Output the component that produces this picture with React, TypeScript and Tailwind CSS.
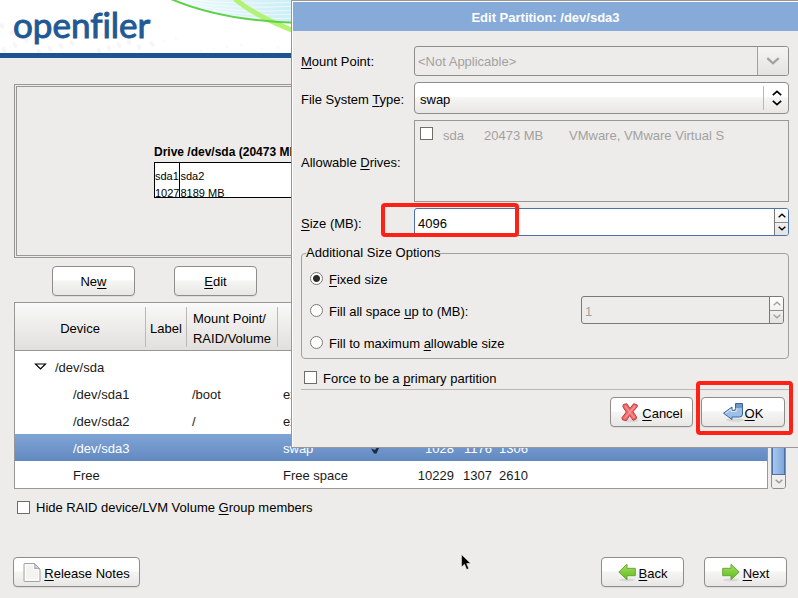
import React, { useState } from 'react';

interface Partition {
  device: string;
  mount: string;
  type: string;
  format: boolean;
  size: number;
  start: number;
  end: number;
}

const PARTITIONS: Partition[] = [
  { device: '/dev/sda1', mount: '/boot', type: 'ext3', format: true, size: 1027, start: 1, end: 131 },
  { device: '/dev/sda2', mount: '/', type: 'ext3', format: true, size: 8189, start: 132, end: 1175 },
  { device: '/dev/sda3', mount: '', type: 'swap', format: true, size: 1028, start: 1176, end: 1306 },
  { device: 'Free', mount: '', type: 'Free space', format: false, size: 10229, start: 1307, end: 2610 },
];

const BUTTON =
  'flex h-[30px] items-center justify-center rounded-[4px] border border-[#8f8c89] bg-linear-to-b from-white from-45% via-[#f5f5f4] via-50% to-[#e8e7e5] pt-0.5 shadow-[0_1px_0_#dddcda]';

const CHECKBOX =
  'h-[13px] w-[13px] shrink-0 appearance-none border border-[#6f6c69] bg-white checked:bg-[#4a72a8]';

// Underlined mnemonic letter
const Key: React.FC<{ children: React.ReactNode }> = ({ children }) => (
  <span className="underline decoration-1 underline-offset-2 [text-decoration-skip-ink:none]">{children}</span>
);

const Chevron: React.FC<{ up?: boolean; size: number; color: string; stroke?: number }> = ({
  up,
  size,
  color,
  stroke = 2,
}) => (
  <svg width={size} height={size / 2 + 1} viewBox="0 0 12 7" fill="none" stroke={color} strokeWidth={stroke} aria-hidden>
    <path d={up ? 'M1 6 6 1.5 11 6' : 'M1 1 6 5.5 11 1'} />
  </svg>
);

const CancelIcon = () => (
  <svg width="20" height="20" viewBox="0 0 20 20" aria-hidden>
    <ellipse cx="10.500" cy="17.500" rx="8" ry="1.800" fill="#d9d8d6" />
    <path
      d="M3.300 1.600 6.800.7 10 5.500 13.600.7 17.200 1.900 17.300 3.600 13 8.700 16.500 14 16.100 16 13.100 17.300 9.700 12.500 6.400 17.600 2.600 16.800 1.900 14.800 6.300 9.100 2.900 3.800Z"
      fill="#ef6a6a"
      stroke="#c23a3e"
      strokeLinejoin="round"
    />
    <path d="M5 3 9.800 9 14.400 15M15 3 9.800 9 4.600 15.500" stroke="#f59a9a" strokeWidth="1.200" fill="none" />
  </svg>
);

const OkIcon = () => (
  <svg width="22" height="20" viewBox="0 0 22 20" aria-hidden>
    <ellipse cx="12" cy="17" rx="9" ry="1.800" fill="#d9d8d6" />
    <path
      d="M12.500.5H19.500V11Q19.500 14 16.500 14H9V16.500L.5 10.200 9 4V7.300H11Q12.500 7.300 12.500 5.500Z"
      fill="#9dbfe6"
      stroke="#3566a4"
      strokeLinejoin="round"
    />
    <path d="M13 1H19V5H13Z" fill="#7495c0" />
    <path d="M2.500 10.200 8 6.200V8.500H12.500Q14 8.500 14 6.500V5.300" stroke="#dbe8f7" fill="none" />
  </svg>
);

const ArrowIcon: React.FC<{ right?: boolean }> = ({ right }) => (
  <svg width="18" height="20" viewBox="0 0 18 20" aria-hidden>
    <defs>
      <linearGradient id="arrow-green" x1="0" y1="0" x2="0" y2="1">
        <stop offset="0" stopColor="#a6e25c" />
        <stop offset="1" stopColor="#5cb81e" />
      </linearGradient>
    </defs>
    <ellipse cx="9" cy="17" rx="8" ry="1.500" fill="#d9d8d6" />
    <path
      d={right ? 'M9 1.200V5.300H.7V12.700H9V16.800L17.200 9Z' : 'M9 1.200V5.300H17.300V12.700H9V16.800L.8 9Z'}
      fill="url(#arrow-green)"
      stroke="#68a83a"
      strokeLinejoin="round"
    />
  </svg>
);

const PageIcon = () => (
  <svg width="18" height="20" viewBox="0 0 18 20" aria-hidden>
    <path d="M1 1Q1 .5 1.500.5H11.500L17 6V18Q17 18.500 16.500 18.500H1.500Q1 18.500 1 18Z" fill="#f3f3f2" stroke="#a3a3a1" />
    <path d="M2.500 2H11V6.500H15.500V17H2.500Z" fill="none" stroke="#ffffff" />
    <path d="M11.500.5Q12.500 3.500 11.500 5.500Q14 5 17 6Z" fill="#d5d5d3" stroke="#a3a3a1" strokeLinejoin="round" />
  </svg>
);

const Banner = () => (
  <header className="relative h-[58px] overflow-hidden border-b-[5px] border-[#1c548f] bg-white">
    <svg className="absolute inset-0 h-full w-full" aria-hidden>
      <defs>
        <linearGradient id="sky" x1="0" x2="1">
          <stop offset="0" stopColor="#f2fbfd" />
          <stop offset="0.180" stopColor="#cdeff6" />
          <stop offset="1" stopColor="#a5deee" />
        </linearGradient>
      </defs>
      <g fill="#f6f6f6">
        {[
          [4, 50], [15, 45], [26, 40], [39, 52], [50, 49], [61, 46], [72, 43], [2, 26], [12, 33],
          [99, 51], [109, 48], [119, 45], [129, 42], [139, 47], [152, 44],
        ].map(([x, y]) => (
          <ellipse key={`${x}-${y}`} cx={x} cy={y} rx="2" ry="3" transform={`rotate(-25 ${x} ${y})`} />
        ))}
      </g>
      <g fill="#fafafa">
        {[[164, 41], [176, 39], [201, 51], [214, 49], [227, 47], [241, 45], [262, 49], [278, 48]].map(([x, y]) => (
          <ellipse key={x} cx={x} cy={y} rx="1" ry="2" transform={`rotate(-25 ${x} ${y})`} />
        ))}
      </g>
      <path d="M172 0Q225 20 300 23H798V0Z" fill="url(#sky)" />
      <g fill="none" stroke="#ffffff" strokeOpacity="0.600">
        <path d="M180 1Q235 10 300 6M185 4Q240 14 300 10M196 8Q245 17 300 14M212 13Q255 20 300 18M190 0Q240 5 300 2" />
      </g>
      <path d="M235 -1Q258 18 300 33" fill="none" stroke="#b4f274" strokeWidth="5" />
      <path d="M171 -1Q222 21 300 23" fill="none" stroke="#5fd04a" strokeWidth="2" />
    </svg>
    <h1 className="relative pl-[13px] font-['Lato',sans-serif] text-[35px] leading-[48px] text-[#1f5a96] [-webkit-text-stroke:1px_#1f5a96] [font-variant-ligatures:none]">
      openfiler
    </h1>
  </header>
);

const DriveMap = () => (
  <section className="mt-[26px] h-[174px] border-[3px] border-double border-[#999795]">
    <div className="mx-auto mt-[57px] w-[492px]">
      <h2 className="h-[18px] leading-[17px] text-xs font-bold">
        Drive /dev/sda (20473 MB) (Model: VMware, VMware Virtual S)
      </h2>
      <div className="flex h-9 border border-black bg-white text-[11px]">
        {PARTITIONS.map((p, i) => (
          <div
            key={p.device}
            className="overflow-hidden border-r border-black pt-[5px] leading-[17px] whitespace-nowrap last:border-r-0"
            style={{ flex: `${p.size} 0 0` }}
          >
            {i < 3 ? p.device.replace('/dev/', '') : p.device}
            <br />
            {p.size} MB
          </div>
        ))}
      </div>
    </div>
  </section>
);

const PartitionTable: React.FC = () => {
  const [selected, setSelected] = useState('/dev/sda3');
  const th = 'h-12 border-b border-[#999795] p-0 font-normal';
  const split = 'flex h-10 items-center justify-center border-r border-[#bbb9b7] pt-1';

  return (
    <div className="mt-1.5 flex gap-[3px]">
      <div className="h-[187px] min-w-0 flex-1 overflow-hidden border border-[#999795] bg-white">
        <table className="w-full table-fixed border-separate border-spacing-0 text-[#1a1a1a]">
          <colgroup>
            <col className="w-[131px]" />
            <col className="w-[41px]" />
            <col className="w-[91px]" />
            <col className="w-[78px]" />
            <col className="w-[46px]" />
            <col className="w-[56px]" />
            <col className="w-[38px]" />
            <col className="w-[36px]" />
            <col />
          </colgroup>
          <thead className="bg-linear-to-b from-[#fafafa] from-0% via-[#edecea] via-50% to-[#e0dfdd] text-black">
            <tr>
              <th className={th}><div className={split}>Device</div></th>
              <th className={th}><div className={split}>Label</div></th>
              <th className={th}>
                <div className={`${split} text-left leading-5`}>
                  Mount Point/
                  <br />
                  RAID/Volume
                </div>
              </th>
              <th className={th}><div className={split}>Type</div></th>
              <th className={th}><div className={split}>Format</div></th>
              <th className={th}><div className={split}>Size</div></th>
              <th className={th}><div className={split}>Start</div></th>
              <th className={th}><div className={split}>End</div></th>
              <th className={th}></th>
            </tr>
          </thead>
          <tbody>
            <tr>
              <td className="h-[29px] p-0 pt-1" colSpan={9}>
                <div className="flex items-center gap-2 pl-[19px]">
                  <svg width="13" height="9" viewBox="0 0 13 9" aria-hidden>
                    <path d="M1.500 1H11.500L6.500 6Z" fill="#fff" stroke="#000" strokeWidth="1.200" />
                  </svg>
                  /dev/sda
                </div>
              </td>
            </tr>
            {PARTITIONS.map((p) => (
              <tr
                key={p.device}
                className={
                  p.device === selected ? 'h-[27px] bg-linear-to-b from-[#80a4d6] to-[#6289c0] text-white' : 'h-[27px]'
                }
                onClick={() => setSelected(p.device)}
              >
                <td className="p-0 pt-0.5 pl-[58px]">{p.device}</td>
                <td className="p-0"></td>
                <td className="p-0 pt-0.5 pl-[5px]">{p.mount}</td>
                <td className="p-0 pt-0.5 pl-[5px] whitespace-nowrap">{p.type}</td>
                <td className="p-0">
                  {p.format && (
                    <svg className="ml-3.5" width="14" height="14" viewBox="0 0 14 14" aria-label="Format">
                      <path d="M1 7.500 4 12.500H6.500Q9 6 13 1.500Q8 4 5 9Z" fill="#1c2c44" />
                    </svg>
                  )}
                </td>
                <td className="p-0 pt-0.5 pr-1 text-right">{p.size}</td>
                <td className="p-0 pt-0.5 pr-1 text-right">{p.start}</td>
                <td className="p-0 pt-0.5 pr-1 text-right">{p.end}</td>
                <td className="p-0"></td>
              </tr>
            ))}
          </tbody>
        </table>
      </div>
      <div className="flex w-[15px] flex-col overflow-hidden rounded-[3px] border border-[#8f8c89]">
        <button className="flex h-[14px] items-center justify-center bg-[#efeeed]" aria-label="Scroll up">
          <Chevron up size={8} color="#999795" />
        </button>
        <div className="flex-1 border-x border-b border-[#4a72a8] bg-linear-to-r from-[#a9c8ee] to-[#80a6da]"></div>
        <button className="flex h-[13px] items-center justify-center bg-[#efeeed]" aria-label="Scroll down">
          <Chevron size={8} color="#999795" />
        </button>
      </div>
    </div>
  );
};

const Spinner: React.FC<{
  id: string;
  value: string;
  onChange: (value: string) => void;
  disabled?: boolean;
  label?: string;
}> = ({ id, value, onChange, disabled, label }) => {
  const arrow = disabled ? '#a3a19f' : '#000000';
  const step = (by: number) => onChange(String(Math.max(1, Number(value) + by)));

  return (
    <div
      className={
        disabled
          ? 'flex h-7 overflow-hidden rounded-[3px] border border-[#7b7875]'
          : 'flex h-7 overflow-hidden rounded-[3px] border border-[#4a72a8] bg-white'
      }
    >
      <input
        id={id}
        aria-label={label}
        className="min-w-0 flex-1 bg-transparent pt-1 pl-[3px] outline-none disabled:text-[#a3a19f]"
        value={value}
        disabled={disabled}
        onChange={(e) => onChange(e.target.value)}
      />
      <div className="flex w-[14px] flex-col border-l border-[#7b7875] bg-linear-to-b from-white to-[#e4e3e1]">
        <button
          className="flex flex-1 items-center justify-center border-b border-[#8f8c89]"
          aria-label="Increase"
          disabled={disabled}
          onClick={() => step(1)}
        >
          <Chevron up size={8} color={arrow} />
        </button>
        <button
          className="flex flex-1 items-center justify-center"
          aria-label="Decrease"
          disabled={disabled}
          onClick={() => step(-1)}
        >
          <Chevron size={8} color={arrow} />
        </button>
      </div>
    </div>
  );
};

const SizeOption: React.FC<{
  name: string;
  selected: string;
  onSelect: (name: string) => void;
  children: React.ReactNode;
}> = ({ name, selected, onSelect, children }) => (
  <label className="flex h-8 items-center gap-1.5">
    <input
      type="radio"
      name="size-option"
      className="h-[13px] w-[13px] appearance-none rounded-full border border-[#7b7875] bg-white checked:bg-[radial-gradient(circle,#2a2a2a_3px,#ffffff_4px)]"
      checked={selected === name}
      onChange={() => onSelect(name)}
    />
    <span className="pt-1">{children}</span>
  </label>
);

const EditDialog: React.FC = () => {
  const [fsType, setFsType] = useState('swap');
  const [size, setSize] = useState('4096');
  const [maxSize, setMaxSize] = useState('1');
  const [option, setOption] = useState('fixed');

  return (
    <div
      role="dialog"
      aria-labelledby="dialog-title"
      className="absolute top-0 right-0 left-[291px] border-t border-b border-l border-[#999795] bg-[#edeceb] pb-5 shadow-[inset_1px_1px_0_#ffffff]"
    >
      <h2
        id="dialog-title"
        className="mt-px ml-px h-[29px] bg-[#86abd9] pt-0.5 text-center leading-[27px] font-bold text-white"
      >
        Edit Partition: /dev/sda3
      </h2>
      <div className="pt-[15px] pr-[9px] pl-[9px]">
        <div className="grid grid-cols-[113px_1fr] items-center gap-y-1.5">
          <label htmlFor="mount-point" className="pt-0.5"><Key>M</Key>ount Point:</label>
          <div className="flex h-[30px] overflow-hidden rounded-[3px] border border-[#8f8c89]">
            <input
              id="mount-point"
              className="min-w-0 flex-1 border-r border-[#a3a19f] pt-0.5 pl-[3px] text-[#a3a19f]"
              value="<Not Applicable>"
              disabled
              readOnly
            />
            <button
              className="flex w-[30px] items-center justify-center bg-linear-to-b from-[#f4f4f3] to-[#e4e3e1]"
              aria-label="Show mount points"
              disabled
            >
              <Chevron size={14} color="#a3a19f" />
            </button>
          </div>

          <label htmlFor="fs-type" className="pt-1 whitespace-nowrap">File System <Key>T</Key>ype:</label>
          <div className="relative">
            <select
              id="fs-type"
              className="block h-8 w-full appearance-none rounded-[4px] border border-[#8f8c89] bg-linear-to-b from-white from-45% via-[#f5f5f4] via-50% to-[#e8e7e5] pt-1 pl-[5px]"
              value={fsType}
              onChange={(e) => setFsType(e.target.value)}
            >
              <option>ext2</option>
              <option>ext3</option>
              <option>swap</option>
            </select>
            <div className="pointer-events-none absolute inset-y-1 right-0 flex w-[26px] flex-col items-center justify-center gap-1 border-l border-[#bbb9b7]">
              <Chevron up size={10} color="#000000" />
              <Chevron size={10} color="#000000" />
            </div>
          </div>

          <span className="pt-1">Allowable <Key>D</Key>rives:</span>
          <div className="h-[82px] border border-[#999795] pt-1.5 pl-[5px]">
            <label className="flex gap-2.5 whitespace-nowrap text-[#a3a19f]">
              <input type="checkbox" className={CHECKBOX} disabled />
              <span className="w-[31px]">sda</span>
              <span className="w-[75px]">20473 MB</span>
              <span>VMware, VMware Virtual S</span>
            </label>
          </div>

          <label htmlFor="size" className="pt-1"><Key>S</Key>ize (MB):</label>
          <div className="relative">
            <Spinner id="size" value={size} onChange={setSize} />
            <div className="pointer-events-none absolute -top-[5px] -bottom-px -left-[33px] w-[138px] rounded-[4px] border-4 border-[#ff2116]"></div>
          </div>
        </div>

        <fieldset className="mt-2 rounded-[4px] border border-[#a3a19f]">
          <legend className="ml-1 leading-[18px]">Additional Size Options</legend>
          <div className="pr-1 pl-2">
            <SizeOption name="fixed" selected={option} onSelect={setOption}>
              <Key>F</Key>ixed size
            </SizeOption>
            <div className="flex h-8 items-center justify-between">
              <SizeOption name="fill-to" selected={option} onSelect={setOption}>
                Fill all space <Key>u</Key>p to (MB):
              </SizeOption>
              <div className="w-[203px]">
                <Spinner
                  id="max-size"
                  label="Maximum size (MB)"
                  value={maxSize}
                  onChange={setMaxSize}
                  disabled={option !== 'fill-to'}
                />
              </div>
            </div>
            <SizeOption name="fill-max" selected={option} onSelect={setOption}>
              Fill to maximum <Key>a</Key>llowable size
            </SizeOption>
          </div>
        </fieldset>

        <label className="mt-1.5 flex h-6 items-center gap-1.5 pl-[3px]">
          <input type="checkbox" className={CHECKBOX} />
          <span className="pt-1">Force to be a <Key>p</Key>rimary partition</span>
        </label>
        <hr className="border-[#bbb9b7]" />

        <div className="mt-[7px] flex justify-end gap-2 pr-1">
          <button className={`${BUTTON} w-[83px] gap-0.5`}>
            <CancelIcon />
            <span className="pt-0.5"><Key>C</Key>ancel</span>
          </button>
          <div className="relative">
            <button className={`${BUTTON} w-[84px]`}>
              <OkIcon />
              <span className="pt-0.5"><Key>O</Key>K</span>
            </button>
            <div className="pointer-events-none absolute -top-4 -right-2 -bottom-2 -left-[5px] rounded-[4px] border-4 border-[#ff2116]"></div>
          </div>
        </div>
      </div>
    </div>
  );
};

const App: React.FC = () => {
  const [hideRaid, setHideRaid] = useState(false);

  return (
    <div className="relative flex min-h-screen flex-col overflow-hidden bg-[#edeceb] font-['Liberation_Sans',Arial,sans-serif] text-[13px] leading-[18px] text-black">
      <Banner />
      <main className="pr-3 pl-3.5">
        <DriveMap />
        <div className="mt-2 flex justify-between pr-[41px] pl-[38px]">
          <button className={`${BUTTON} w-[83px]`}>Ne<Key>w</Key></button>
          <button className={`${BUTTON} w-[83px]`}><Key>E</Key>dit</button>
          <button className={`${BUTTON} w-[83px]`}><Key>D</Key>elete</button>
          <button className={`${BUTTON} w-[83px]`}>Re<Key>s</Key>et</button>
          <button className={`${BUTTON} w-[83px]`}>R<Key>A</Key>ID</button>
          <button className={`${BUTTON} w-[83px]`}><Key>L</Key>VM</button>
        </div>
        <PartitionTable />
        <label className="mt-2 flex items-center gap-1.5 pl-[3px]">
          <input
            type="checkbox"
            className={CHECKBOX}
            checked={hideRaid}
            onChange={(e) => setHideRaid(e.target.checked)}
          />
          <span className="pt-0.5">Hide RAID device/LVM Volume <Key>G</Key>roup members</span>
        </label>
      </main>
      <footer className="mt-auto flex gap-5 pr-[11px] pb-[11px] pl-[13px]">
        <button className={`${BUTTON} mr-auto w-[127px] gap-[3px]`}>
          <PageIcon />
          <span className="pt-0.5"><Key>R</Key>elease Notes</span>
        </button>
        <button className={`${BUTTON} w-[83px] gap-[3px]`}>
          <ArrowIcon />
          <span className="pt-0.5"><Key>B</Key>ack</span>
        </button>
        <button className={`${BUTTON} w-[83px] gap-[3px]`}>
          <ArrowIcon right />
          <span className="pt-0.5"><Key>N</Key>ext</span>
        </button>
      </footer>
      <EditDialog />
      <svg className="pointer-events-none absolute top-[554px] left-[461px]" width="11" height="17" viewBox="0 0 11 17" aria-hidden>
        <path d="M.5.500V13L3.500 10.300 5.700 15.500 7.800 14.600 5.600 9.500H9.700Z" fill="#000" stroke="#fff" strokeWidth="0.500" />
      </svg>
    </div>
  );
};

export default App;
